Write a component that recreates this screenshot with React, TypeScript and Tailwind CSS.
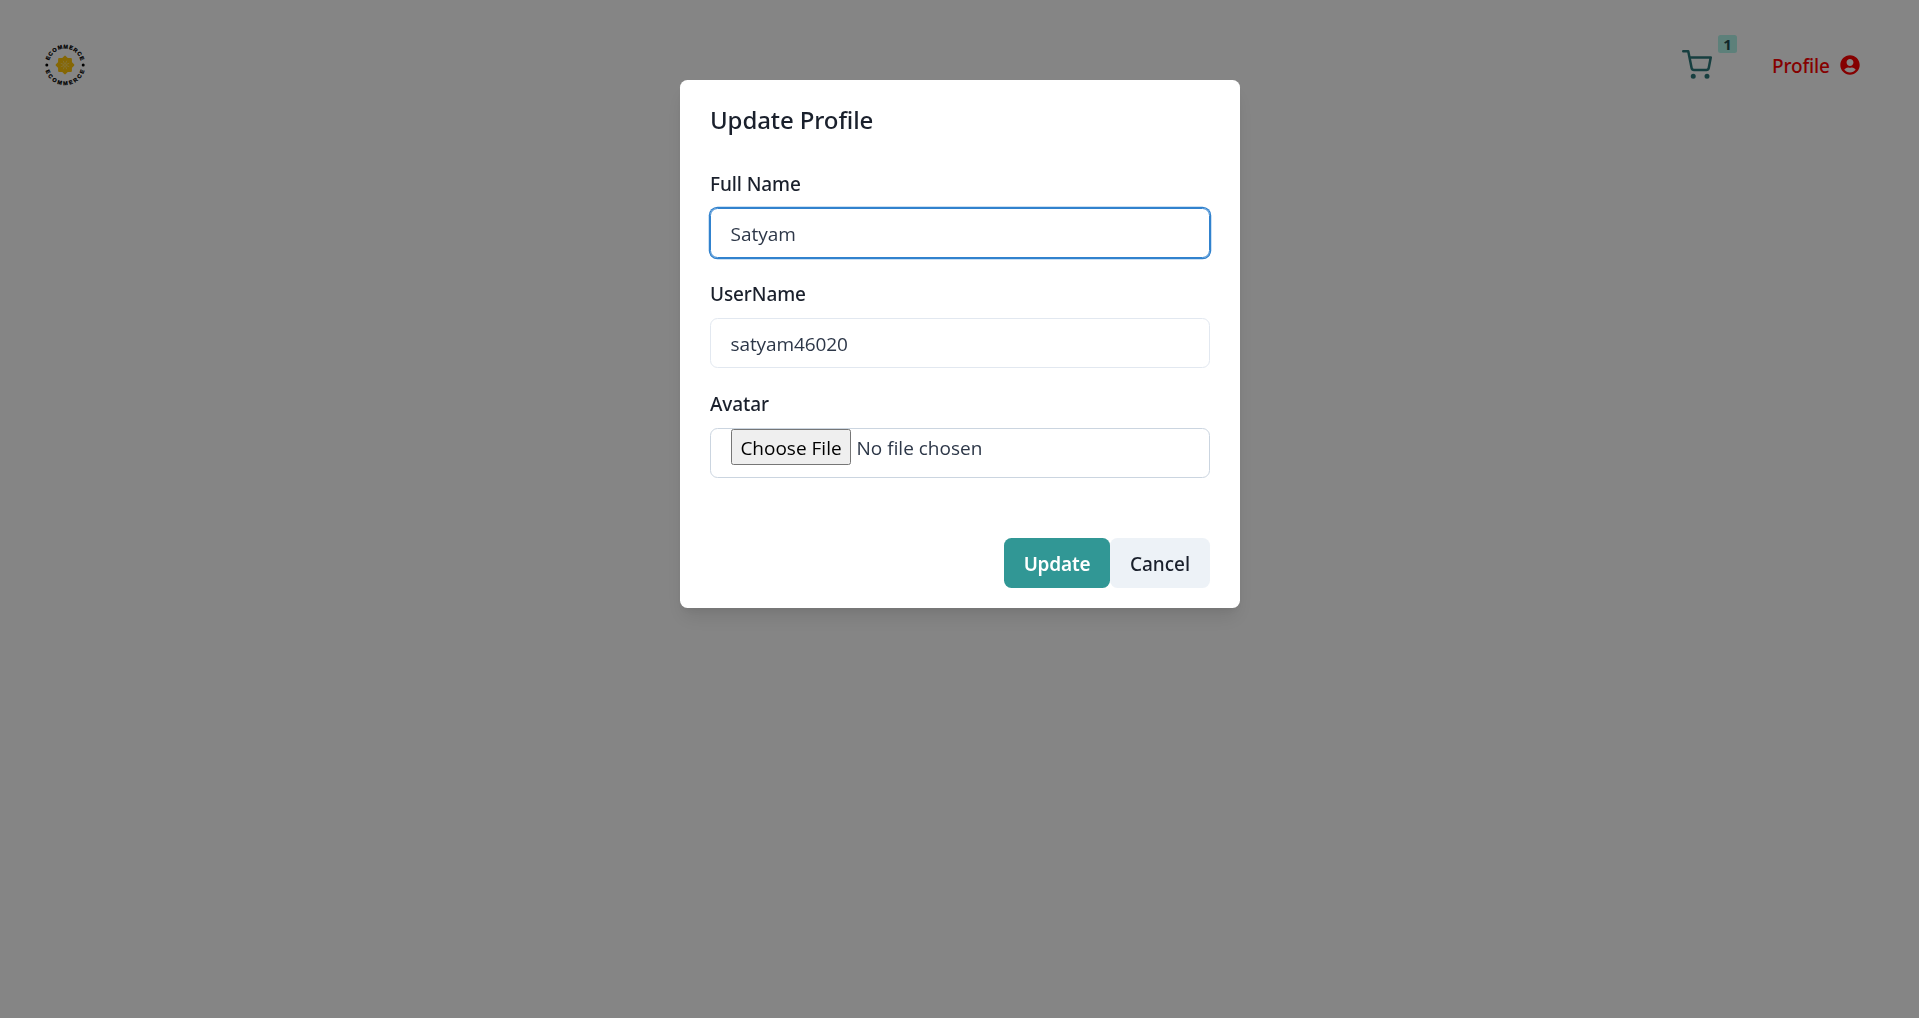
import React from 'react';
import { FiShoppingCart } from 'react-icons/fi';
import { FaUserCircle } from 'react-icons/fa';

const RAYS = [0, 45, 90, 135, 180, 225, 270, 315];

function Logo() {
  return (
    <svg width="44" height="44" viewBox="-22 -22 44 44" aria-label="Ecommerce">
      <defs>
        <path id="arc-top" d="M-16.4 0A16.4 16.4 0 0 1 16.4 0" />
        <path id="arc-bottom" d="M-20.2 0A20.2 20.2 0 0 0 20.2 0" />
      </defs>
      <g
        className="fill-black stroke-black font-['Liberation_Sans'] text-[5.5px] font-bold"
        strokeWidth="0.25"
        textAnchor="middle"
      >
        <text letterSpacing="0.75">
          <textPath href="#arc-top" startOffset="50.7%">ECOMMERCE</textPath>
        </text>
        <text letterSpacing="1.9">
          <textPath href="#arc-bottom" startOffset="51.5%">ECOMMERCE</textPath>
        </text>
      </g>
      <circle cx="-18.2" cy="0" r="1.5" />
      <circle cx="18.2" cy="0" r="1.5" />
      <g fill="#ffc60a">
        <rect x="-6.9" y="-6.9" width="13.8" height="13.8" rx="1" />
        <rect x="-6.9" y="-6.9" width="13.8" height="13.8" rx="1" transform="rotate(45)" />
      </g>
      <g stroke="#fff3c4" strokeWidth="0.4">
        {RAYS.map((a) => (
          <path key={a} d="M0 -0.8V-4.6" transform={`rotate(${a + 22})`} />
        ))}
      </g>
    </svg>
  );
}

function Header() {
  return (
    <header className="flex h-[130px] items-center justify-between pr-[59px] pl-[43px]">
      <Logo />
      <div className="flex items-center">
        <div className="relative mr-[59px]">
          <FiShoppingCart size={30} className="text-[#2c7a7b]" />
          <span className="absolute -top-[15px] left-[36px] flex h-[18px] w-[19px] items-center justify-center rounded-[2.5px] bg-[#b2f5ea] text-[15px] leading-none font-bold text-[#234e52]">
            1
          </span>
        </div>
        <div className="flex items-center text-[19px] font-medium text-[#ff0000]">
          <span className="relative top-px w-[69px] pl-px tracking-[-0.15px]">Profile</span>
          <FaUserCircle size={20} />
        </div>
      </div>
    </header>
  );
}

function Field({ label, children }: { label: string; children: React.ReactNode }) {
  return (
    <div className="mb-5">
      <div className="mb-2.5 h-[30px] pl-[0.5px] text-[19px] leading-[33px] font-medium tracking-[-0.1px]">{label}</div>
      {children}
    </div>
  );
}

function Modal() {
  return (
    <section className="mt-20 h-[528px] w-[560px] rounded-[7.5px] bg-white px-[30px] text-[#1a202c] shadow-[0_12.5px_18.75px_-3.75px_rgba(0,0,0,0.1),0_5px_7.5px_-2.5px_rgba(0,0,0,0.05)]">
      <h2 className="h-[88px] pt-5 pl-[0.5px] text-[24px] leading-[40px] font-medium tracking-[-0.1px]">Update Profile</h2>
      <Field label="Full Name">
        <div className="flex h-[50px] items-center rounded-[7.5px] border border-[#3182ce] px-[20px] font-['Open_Sans'] text-[19px] text-[#2d3748] shadow-[0_0_0_1.25px_#3182ce]">
          <span className="relative top-px">Satyam</span>
        </div>
      </Field>
      <Field label="UserName">
        <div className="flex h-[50px] items-center rounded-[7.5px] border border-[#e2e8f0] px-[20px] font-['Open_Sans'] text-[19px] tracking-[-0.1px] text-[#2d3748]">
          <span className="relative top-px">satyam46020</span>
        </div>
      </Field>
      <Field label="Avatar">
        <div className="flex h-[50px] items-start rounded-[7.5px] border border-[#cbd5e0] px-[20px] font-['Open_Sans'] text-[19px] text-[#2d3748]">
          <span className="flex h-9 w-[120px] items-center justify-center rounded-[2.5px] border border-[#767676] bg-[#efefef] pt-0.5 pl-px text-black">
            Choose File
          </span>
          <span className="ml-[6px] leading-[38px]">No file chosen</span>
        </div>
      </Field>
      <div className="flex justify-end pt-10 text-[19px]">
        <div className="flex h-[50px] w-[106px] items-center justify-center rounded-[7.5px] bg-[#319795] pt-0.5 pl-px font-semibold tracking-[-0.2px] text-white">
          Update
        </div>
        <div className="flex h-[50px] w-[100px] items-center justify-center rounded-[7.5px] bg-[#edf2f7] pt-0.5 pl-px font-medium">
          Cancel
        </div>
      </div>
    </section>
  );
}

export default function App() {
  return (
    <div className="h-screen overflow-hidden bg-white font-['Noto_Sans',sans-serif]">
      <Header />
      <div className="fixed inset-0 flex items-start justify-center bg-black/48">
        <Modal />
      </div>
    </div>
  );
}
